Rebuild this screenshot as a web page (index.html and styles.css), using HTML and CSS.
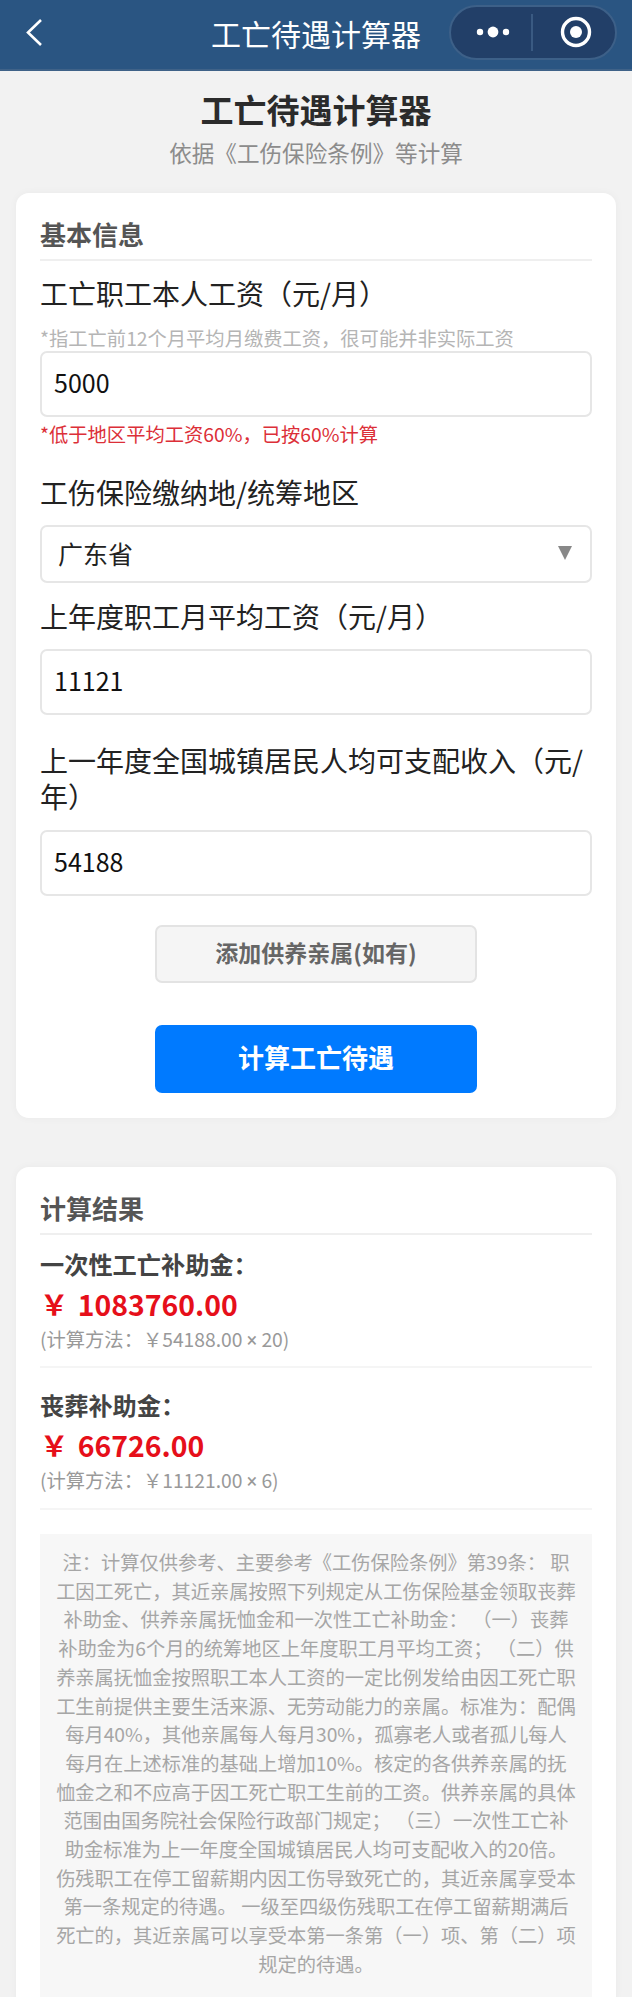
FILE: index.html
```html
<!DOCTYPE html>
<html lang="zh-CN">
<head>
<meta charset="utf-8">
<title>工亡待遇计算器</title>
<link rel="stylesheet" href="styles.css">
</head>
<body>
<header class="navbar">
  <svg class="back" width="20" height="30" viewBox="0 0 20 30"><path d="M16 3 L3 15.5 L16 28" fill="none" stroke="#fff" stroke-width="2.6"/></svg>
  <div class="nav-title">工亡待遇计算器</div>
  <div class="capsule">
    <svg class="capsule-dots" width="50" height="14" viewBox="0 0 50 14"><circle cx="6" cy="7" r="3.2" fill="#fff"/><circle cx="19" cy="7" r="5.4" fill="#fff"/><circle cx="32" cy="7" r="3.2" fill="#fff"/></svg>
    <span class="capsule-divider"></span>
    <svg class="capsule-target" width="32" height="32" viewBox="0 0 32 32"><circle cx="16" cy="16" r="13.5" fill="none" stroke="#fff" stroke-width="3.4"/><circle cx="16" cy="16" r="6" fill="#fff"/></svg>
  </div>
</header>
<main class="page">
  <h1 class="page-title">工亡待遇计算器</h1>
  <p class="page-sub">依据《工伤保险条例》等计算</p>

  <section class="card card-form">
    <h2 class="card-title">基本信息</h2>
    <div class="label first">工亡职工本人工资（元/月）</div>
    <div class="hint">*指工亡前12个月平均月缴费工资，很可能并非实际工资</div>
    <input class="input" type="text" value="5000">
    <div class="warn">*低于地区平均工资60%，已按60%计算</div>
    <div class="label after-warn">工伤保险缴纳地/统筹地区</div>
    <div class="select">
      <span>广东省</span>
      <svg width="14" height="14" viewBox="0 0 14 14"><path d="M0 0 H14 L7 14 Z" fill="#888"/></svg>
    </div>
    <div class="label after-select">上年度职工月平均工资（元/月）</div>
    <input class="input" type="text" value="11121">
    <div class="label after-input">上一年度全国城镇居民人均可支配收入（元/年）</div>
    <input class="input" type="text" value="54188">
    <button class="btn btn-add" type="button">添加供养亲属(如有)</button>
    <button class="btn btn-primary" type="button">计算工亡待遇</button>
  </section>

  <section class="card card-result">
    <h2 class="card-title">计算结果</h2>
    <div class="item item-first">
      <div class="item-label">一次性工亡补助金：</div>
      <div class="item-amount">￥ 1083760.00</div>
      <div class="item-method">(计算方法：￥54188.00 <span class="times">×</span> 20)</div>
    </div>
    <div class="item item-second">
      <div class="item-label">丧葬补助金：</div>
      <div class="item-amount">￥ 66726.00</div>
      <div class="item-method">(计算方法：￥11121.00 <span class="times">×</span> 6)</div>
    </div>
    <div class="note">注：计算仅供参考、主要参考《工伤保险条例》第39条： 职工因工死亡，其近亲属按照下列规定从工伤保险基金领取丧葬补助金、供养亲属抚恤金和一次性工亡补助金： （一）丧葬补助金为6个月的统筹地区上年度职工月平均工资； （二）供养亲属抚恤金按照职工本人工资的一定比例发给由因工死亡职工生前提供主要生活来源、无劳动能力的亲属。标准为：配偶每月40%，其他亲属每人每月30%，孤寡老人或者孤儿每人<br>每月在上述标准的基础上增加10%。核定的各供养亲属的抚<br>恤金之和不应高于因工死亡职工生前的工资。供养亲属的具体范围由国务院社会保险行政部门规定； （三）一次性工亡补助金标准为上一年度全国城镇居民人均可支配收入的20倍。 伤残职工在停工留薪期内因工伤导致死亡的，其近亲属享受本第一条规定的待遇。 一级至四级伤残职工在停工留薪期满后死亡的，其近亲属可以享受本第一条第（一）项、第（二）项规定的待遇。</div>
  </section>
</main>
</body>
</html>
```
FILE: styles.css
```css
* { box-sizing: border-box; }
html, body { margin: 0; padding: 0; }
body {
  width: 632px;
  height: 1997px;
  overflow: hidden;
  background: #f2f2f2;
  font-family: "Noto Sans CJK SC", "Noto Sans", sans-serif;
  color: #222;
}
.navbar {
  position: relative;
  display: flex;
  align-items: center;
  justify-content: space-between;
  height: 71px;
  padding: 0 15px 5px 25px;
  background: #2a5582;
  border-bottom: 2px solid #3f6288;
  color: #fff;
}
.nav-title {
  position: absolute;
  left: 0;
  right: 0;
  top: 15px;
  text-align: center;
  font-size: 30px;
  line-height: 36px;
  pointer-events: none;
}
.capsule {
  display: flex;
  align-items: center;
  width: 168px;
  height: 55px;
  padding-left: 23px;
  border: 2px solid #3d6088;
  border-radius: 28px;
  background: #223f68;
}
.capsule-dots { flex: none; }
.capsule-divider {
  flex: none;
  width: 2px;
  height: 37px;
  margin-left: 7px;
  background: #3a5a82;
}
.capsule-target { flex: none; margin-left: 27px; }
.page { padding: 0 16px; }
.page-title {
  margin: 0;
  padding-top: 18px;
  text-align: center;
  font-size: 33px;
  line-height: 40px;
  font-weight: 700;
  color: #2b2b2b;
}
.page-sub {
  margin: 9px 0 25px;
  text-align: center;
  font-size: 22.6px;
  line-height: 30px;
  color: #8c8c8c;
}
.card {
  padding: 23px 24px 25px;
  background: #fff;
  border-radius: 13px;
  box-shadow: 0 0 8px rgba(0, 0, 0, .04);
}
.card-result { margin-top: 49px; padding-bottom: 0; }
.card-title {
  margin: 0;
  padding-bottom: 7px;
  border-bottom: 2px solid #efefef;
  font-size: 26px;
  line-height: 36px;
  font-weight: 700;
  color: #555;
}
.label {
  font-size: 28px;
  line-height: 36px;
  color: #222;
  margin-bottom: 14px;
}
.label.first { margin-top: 14px; margin-bottom: 14px; }
.label.after-warn { margin-top: 27px; margin-bottom: 15px; }
.label.after-select { margin-top: 15px; margin-bottom: 15px; }
.label.after-input { margin-top: 27px; margin-bottom: 16px; }
.hint {
  font-size: 19.3px;
  line-height: 26px;
  color: #b5b5b5;
}
.warn {
  margin-top: 4px;
  font-size: 19.3px;
  line-height: 26px;
  color: #dc2f38;
}
.input {
  display: block;
  width: 100%;
  height: 66px;
  padding: 0 12px 5px;
  border: 2px solid #e6e6e6;
  border-radius: 7px;
  background: #fff;
  font-family: inherit;
  font-size: 25px;
  color: #111;
  outline: none;
}
.select {
  display: flex;
  align-items: center;
  justify-content: space-between;
  height: 58px;
  padding: 0 18px 2px 16px;
  border: 2px solid #e6e6e6;
  border-radius: 7px;
  font-size: 25px;
  color: #222;
}
.btn {
  display: block;
  width: 322px;
  margin-left: auto;
  margin-right: auto;
  border-radius: 7px;
  font-family: inherit;
  font-weight: 700;
}
.btn-add {
  height: 58px;
  margin-top: 29px;
  padding-bottom: 6px;
  border: 2px solid #e3e3e3;
  background: #f5f5f5;
  font-size: 23px;
  color: #666;
}
.btn-primary {
  height: 68px;
  margin-top: 42px;
  padding-bottom: 6px;
  border: 0;
  background: #007aff;
  font-size: 26px;
  color: #fff;
}
.item { border-bottom: 2px solid #f5f5f5; }
.item-first { margin-top: 12px; padding-bottom: 12px; }
.item-second { margin-top: 20px; padding-bottom: 13px; }
.item-label {
  font-size: 24.2px;
  line-height: 34px;
  font-weight: 700;
  color: #444;
}
.item-amount {
  margin-top: 3px;
  font-size: 28.4px;
  line-height: 40px;
  font-weight: 700;
  word-spacing: 3px;
  color: #e60f1a;
}
.item-method {
  margin-top: 2px;
  font-size: 19.3px;
  line-height: 26px;
  color: #999;
}
.times { font-family: Roboto, sans-serif; }
.note {
  margin-top: 24px;
  padding: 14px 16px 30px;
  background: #f7f7f7;
  text-align: center;
  font-size: 19.25px;
  line-height: 28.7px;
  color: #a6a6a6;
}
```
